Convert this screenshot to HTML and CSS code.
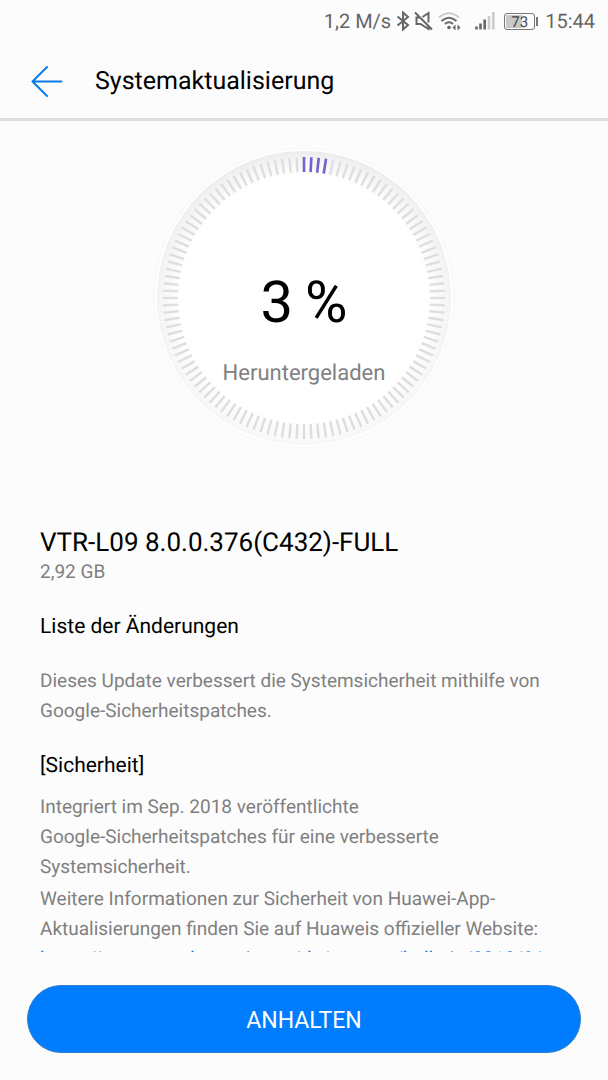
FILE: index.html
```html
<!DOCTYPE html>
<html lang="de">
<head>
<meta charset="utf-8">
<meta name="viewport" content="width=device-width, initial-scale=1">
<title>Systemaktualisierung</title>
<link rel="stylesheet" href="styles.css">
</head>
<body>
<div class="screen">
  <div class="status">
    <span>1,2 M/s</span>
    <svg class="bluetooth" width="14" height="20" viewBox="0 0 14 20"><path d="M1.500 5.500 12 14 7 18.500V1.500L12 6 1.500 14.500"/></svg>
    <svg class="muted" width="20" height="20" viewBox="0 0 20 20"><path d="M1 1.500 18 18.500M6 6.500H2.500V13H6.500L14.500 18V14.500M8.500 6 14.500 2V11.500"/></svg>
    <svg class="wifi" width="24" height="20" viewBox="0 0 24 20"><path class="faint" d="M1 6.500Q11 -2 21 6.500"/><path d="M3.500 10Q11 3.500 18.500 10M7 13Q11 9.500 15 13"/><circle cx="11" cy="16.500" r="1.800"/><path class="solid" d="M17.500 13.500v6l-3-3zM19.500 13.500v6l3-3z"/></svg>
    <svg class="signal" width="20" height="20" viewBox="0 0 20 20"><g stroke-width="2.600"><path d="M1.500 15.500v3M5.500 12.500v6M9.700 8.500v10"/><path class="faint" d="M14 5v13.500M18.300 1v17.500"/></g></svg>
    <span class="battery"><span class="battery-body">73</span><span class="battery-tip"></span></span>
    <span>15:44</span>
  </div>
  <header class="header">
    <button class="back" type="button" aria-label="Zurück">
      <svg width="32" height="32" viewBox="0 0 32 32"><path d="M16 1 1.500 15.500 16 30M1.500 15.500H30.500"/></svg>
    </button>
    <h1 class="title">Systemaktualisierung</h1>
  </header>
  <main class="content">
    <section class="progress">
      <svg class="dial" viewBox="0 0 304 304" aria-hidden="true">
        <defs>
          <linearGradient id="rim" x1="0" y1="0" x2="0" y2="1"><stop offset="0" stop-color="#e9e9e9"/><stop offset=".5" stop-color="#f1f1f1"/><stop offset="1" stop-color="#f7f7f7"/></linearGradient>
          <radialGradient id="face" gradientUnits="userSpaceOnUse" cx="152" cy="152" r="147"><stop offset=".84" stop-color="#fff"/><stop offset=".96" stop-color="#fff" stop-opacity=".4"/><stop offset="1" stop-color="#fff" stop-opacity=".1"/></radialGradient>
          <path id="tick" d="M152 11V26"/>
          <g id="five">
            <use href="#tick"/>
            <use href="#tick" transform="rotate(3 152 152)"/>
            <use href="#tick" transform="rotate(6 152 152)"/>
            <use href="#tick" transform="rotate(9 152 152)"/>
            <use href="#tick" transform="rotate(12 152 152)"/>
          </g>
          <g id="ten">
            <use href="#five"/>
            <use href="#five" transform="rotate(15 152 152)"/>
          </g>
          <g id="quarter">
            <use href="#ten"/>
            <use href="#ten" transform="rotate(30 152 152)"/>
            <use href="#ten" transform="rotate(60 152 152)"/>
          </g>
        </defs>
        <circle cx="152" cy="152" r="151" fill="#f9f9f9"/>
        <circle cx="152" cy="152" r="149" fill="#fefefe"/>
        <circle cx="152" cy="152" r="147" fill="url(#rim)"/>
        <circle cx="152" cy="152" r="147" fill="url(#face)"/>
        <g stroke="#dedede" stroke-width="2.400">
          <use href="#quarter"/>
          <use href="#quarter" transform="rotate(90 152 152)"/>
          <use href="#quarter" transform="rotate(180 152 152)"/>
          <use href="#quarter" transform="rotate(270 152 152)"/>
        </g>
        <g stroke="#7664cb" stroke-width="2.600">
          <use href="#tick"/>
          <use href="#tick" transform="rotate(3 152 152)"/>
          <use href="#tick" transform="rotate(6 152 152)"/>
          <use href="#tick" transform="rotate(9 152 152)"/>
          <use href="#tick" transform="rotate(12 152 152)" stroke="#e4e0f4"/>
        </g>
      </svg>
      <div class="readout">
        <div class="percent">3&thinsp;%</div>
        <div class="state">Heruntergeladen</div>
      </div>
    </section>
    <section class="details">
      <h2 class="version">VTR-L09 8.0.0.376(C432)-FULL</h2>
      <p class="size">2,92 GB</p>
      <h3 class="subhead">Liste der Änderungen</h3>
      <p class="text">Dieses Update verbessert die Systemsicherheit mithilfe von Google-Sicherheitspatches.</p>
      <h3 class="subhead security">[Sicherheit]</h3>
      <p class="text">Integriert im Sep. 2018 veröffentlichte<br>Google-Sicherheitspatches für eine verbesserte Systemsicherheit.</p>
      <p class="text">Weitere Informationen zur Sicherheit von Huawei-App-Aktualisierungen finden Sie auf Huaweis offizieller Website: <a class="link" href="https://consumer.huawei.com/de/support/bulletin/2018/9/">https://consumer.huawei.com/de/support/bulletin/2018/9/</a></p>
    </section>
  </main>
  <footer class="footer">
    <button class="pause" type="button">ANHALTEN</button>
  </footer>
</div>
</body>
</html>
```
FILE: styles.css
```css
* {
  box-sizing: border-box;
}

body {
  margin: 0;
  background: #fcfcfc;
  color: #000;
  font-family: Roboto, "Liberation Sans", sans-serif;
  text-rendering: geometricPrecision;
}

h1, h2, h3, p {
  margin: 0;
  font-weight: 400;
}

.screen {
  display: flex;
  flex-direction: column;
  height: 100vh;
}

.status {
  display: flex;
  flex: none;
  align-items: center;
  justify-content: flex-end;
  height: 42px;
  padding-right: 13px;
  color: #666;
  font-size: 20px;
}

.status svg {
  fill: none;
  stroke: #666;
  stroke-width: 2;
}

.status .faint {
  stroke: #ccc;
}

.status .solid,
.status circle {
  fill: #666;
  stroke: none;
}

.bluetooth {
  margin-left: 5px;
}

.muted {
  margin-left: 4px;
}

.wifi {
  margin-left: 4px;
}

.signal {
  margin-left: 13px;
}

.battery {
  display: flex;
  align-items: center;
  gap: 1px;
  margin: 0 7px 0 9px;
}

.battery-body {
  width: 31px;
  height: 17px;
  border: 1px solid #777;
  border-radius: 3px;
  background: linear-gradient(to right, #c8c8c8 60%, #fcfcfc 60%);
  box-shadow: inset 0 0 0 1px #fcfcfc;
  color: #444;
  font-size: 15px;
  line-height: 16px;
  text-align: center;
}

.battery-tip {
  width: 2px;
  height: 9px;
  background: #777;
}

.header {
  display: flex;
  flex: none;
  align-items: center;
  gap: 32px;
  height: 79px;
  padding: 3px 31px 0;
  border-bottom: 3px solid #dedede;
}

.back {
  display: flex;
  padding: 0;
  border: 0;
  background: none;
}

.back svg {
  fill: none;
  stroke: #0a7be8;
  stroke-width: 2;
  stroke-linecap: round;
  stroke-linejoin: round;
}

.title {
  font-size: 25px;
  line-height: 32px;
}

.content {
  flex: 1;
  min-height: 0;
  overflow: hidden;
}

.progress {
  display: grid;
  justify-items: center;
  padding-top: 25px;
}

.dial,
.readout {
  grid-area: 1 / 1;
}

.dial {
  width: 304px;
}

.readout {
  padding-top: 122px;
  text-align: center;
}

.percent {
  font-size: 58px;
  line-height: 70px;
}

.state {
  margin-top: 22px;
  color: #808080;
  font-size: 22px;
  line-height: 28px;
}

.details {
  padding: 77px 40px 0;
}

.version {
  font-size: 26px;
  line-height: 32px;
}

.size {
  color: #808080;
  font-size: 19px;
  line-height: 26px;
}

.subhead {
  margin: 27px 0 24px;
  font-size: 21px;
  line-height: 30px;
}

.security {
  margin: 25px 0 11px;
}

.text {
  color: #808080;
  font-size: 19px;
  line-height: 30px;
}

.text + .text {
  margin-top: 2px;
}

.link {
  color: #0a6ed0;
}

.footer {
  flex: none;
  padding: 33px 27px 27px;
}

.pause {
  width: 100%;
  height: 68px;
  padding: 2px 0 0;
  border: 1px solid #3480c8;
  border-radius: 34px;
  background: #007dff;
  color: #fff;
  font-family: inherit;
  font-size: 23px;
}
```
